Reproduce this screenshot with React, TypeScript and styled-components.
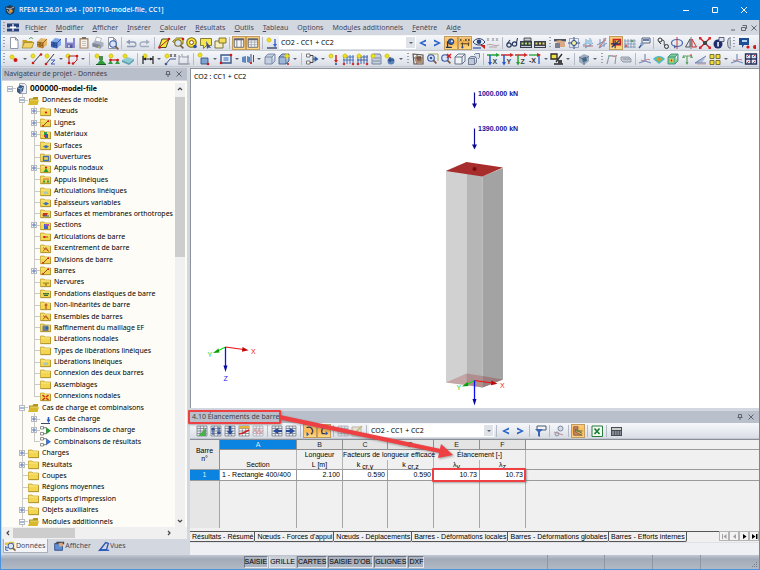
import React, { ReactNode } from "react";
import styled, { createGlobalStyle, css } from "styled-components";

const GlobalStyle = createGlobalStyle`
  * { box-sizing: border-box; }
  body { margin: 0; font-family: "Noto Sans", sans-serif; font-size: 7px; line-height: 10px; color: #000; }
  button, select { font: inherit; color: inherit; padding: 0; margin: 0; border: 0; background: none; }
  svg { display: block; }
`;

/* ---------- drawing helpers ---------- */

type LineProps = { d: string; c?: string; w?: number };
const L = ({ d, c = "#333", w = 1 }: LineProps) => <path d={d} fill="none" stroke={c} strokeWidth={w} />;
const F = ({ d, c = "#333" }: LineProps) => <path d={d} fill={c} />;
const Dot = ({ x, y, r = 1.3, c = "#d01818" }: { x: number; y: number; r?: number; c?: string }) => (
  <circle cx={x} cy={y} r={r} fill={c} />
);
const Spark = ({ x = 4, y = 4 }: { x?: number; y?: number }) => (
  <>
    <path d={`M${x - 3} ${y}H${x + 3}M${x} ${y - 3}V${y + 3}`} stroke="#f0e878" strokeWidth="1" />
    <circle cx={x} cy={y} r="2" fill="#efe21c" stroke="#b9a916" strokeWidth=".5" />
  </>
);
const Cabinet = ({ a, b, k }: { a: string; b: string; k: string }) => (
  <>
    <F d="M2 6l4-4 6 1v6l-4 3-6-1z" c={a} />
    <F d="M2 6l6 1v5.500l-6-1.500z" c={b} />
    <L d="M2 6l6 1 4-4M8 7v5M2 8.500l6 1M4 7.800h2M4 10.200h2" c={k} w={0.7} />
  </>
);
const Paper = () => (
  <path d="M3.500 1.500h5l2.500 2.500v8.500h-7.500zM8.500 1.500v2.500h2.500" fill="#fff" stroke="#777e90" strokeWidth=".8" />
);
const GridBox = ({ c = "#6a717e", f = "#e8ebf0" }: { c?: string; f?: string }) => (
  <path d="M2 2h10v10h-10zM2 4.500h10M2 7h10M2 9.500h10M5.300 2v10M8.700 2v10" fill={f} stroke={c} strokeWidth=".7" />
);
const Lens = ({ x = 6, y = 6, k = "#3757a5" }: { x?: number; y?: number; k?: string }) => (
  <>
    <circle cx={x} cy={y} r="3.300" fill="#d9e6f7" stroke={k} strokeWidth="1.100" />
    <path d={`M${x + 2.4} ${y + 2.4}l3 3`} stroke="#7a5a45" strokeWidth="1.700" />
  </>
);
const Cube = ({ f = "#dfe5ee", k = "#58677f" }: { f?: string; k?: string }) => (
  <path d="M2 5h7v7h-7zM2 5l3-3h7l-3 3M12 2v7l-3 3" fill={f} stroke={k} strokeWidth=".9" />
);
const Axis = ({ label, h, v }: { label: string; h: string; v: string }) => (
  <>
    <L d="M1 3h11" c={h} w={1.5} />
    <F d="M10 1l4 2-4 2z" c={h} />
    <L d="M4 3v9" c={v} w={1.5} />
    <F d="M2 10h4l-2 3.500z" c={v} />
    <text x="6.500" y="12" fontSize="7" fontWeight="700" fontFamily="Liberation Sans, sans-serif" fill="#444">{label}</text>
  </>
);
const Hatch = ({ a, b }: { a: string; b: string }) => (
  <>
    <L d="M3 3v9M6 3v9M9 3v9M12 3v9M2 5h11M2 8h11" c={a} w={0.9} />
    <Dot x={3} y={12} c={b} /><Dot x={12} y={12} c={b} />
  </>
);

const ICONS: Record<string, ReactNode> = {
  new: <Paper />,
  open: <><F d="M1.500 4h4l1 1h5v7h-10z" c="#c9a02a" /><F d="M1 12l2.500-5.500h9.500l-2.500 5.500z" c="#f0d468" /><L d="M1 12l2.500-5.500h9.500l-2.500 5.500z" c="#8f7425" w={0.6} /><L d="M8 3c1.500-2 3-1.500 4 0" c="#3f8f3f" /></>,
  cabinetA: <Cabinet a="#e5b76a" b="#c98c34" k="#70480f" />,
  cabinetB: <Cabinet a="#7da7ea" b="#3b67bf" k="#1d3777" />,
  save: <><F d="M2 2h10v10h-10z" c="#8688cf" /><F d="M4 2h6v4.500h-6z" c="#eceefa" /><F d="M4.500 8.500h5v3.500h-5z" c="#55588f" /><F d="M5.300 9h1.300v2.500h-1.300z" c="#fff" /></>,
  clip: <><F d="M2.500 2h9v10.500h-9z" c="#a98666" /><F d="M3.700 3.500h6.600v8h-6.600z" c="#f4f1ec" /><F d="M5 1h4v2h-4z" c="#77716c" /><L d="M5 5.500h4M5 7.500h4M5 9.500h4" c="#b5b0a8" w={0.7} /></>,
  print: <><F d="M4 5l1.500-4 5 1.500-1.500 4z" c="#fff" /><L d="M4 5l1.500-4 5 1.500-1.500 4z" c="#8a90a0" w={0.6} /><F d="M1.500 7l3-2.500 8 2v3.500l-3 2.500-8-2z" c="#aab1c0" /><F d="M1.500 7l8 2v3.500l-8-2z" c="#7b8499" /><Dot x={8} y={11} r={0.8} c="#f0dd40" /></>,
  preview: <><Paper /><Lens x={8} y={8} /></>,
  undo: <><L d="M3 10.500h7.500c2 0 2-4.500-1-4.500h-4.500" c="#8c9ab5" w={1.3} /><F d="M6 3.500v5l-4-2.500z" c="#8c9ab5" /></>,
  redo: <><L d="M11 10.500h-7.500c-2 0-2-4.500 1-4.500h4.500" c="#a3acbe" w={1.3} /><F d="M8 3.500v5l4-2.500z" c="#a3acbe" /></>,
  plane: <><path d="M2 11.500l3-8.500h7l-3 8.500z" fill="#f6e83c" stroke="#3d3d1c" strokeWidth=".9" /><L d="M2 11.500l10-8.500" c="#b02020" /><Dot x={2.5} y={11.5} /><Dot x={12} y={3} /></>,
  tag: <><path d="M1.500 5.500l4-3.500h6.500v6h-6.500z" fill="#f3e64d" stroke="#5c5520" strokeWidth=".8" /><Lens x={7} y={7} k="#7d6c2a" /><Dot x={12} y={3} /></>,
  target: <><circle cx="6.500" cy="6.500" r="4.700" fill="#f4e53a" stroke="#7f6a10" strokeWidth="1.100" /><circle cx="6.500" cy="6.500" r="2" fill="#fff" stroke="#8a5020" /><Dot x={10} y={10.5} c="#2d4fa5" r={1.8} /></>,
  comment: <><path d="M1.500 2.500h11v7h-5l-3 3v-3h-3z" fill="#f4e651" stroke="#6b6220" strokeWidth=".8" /><F d="M7 5l5 7-2.500-.5-1.500 1.500z" c="#3b4d86" /></>,
  windows: <><path d="M2 5h8v7h-8z" fill="#f5eec0" stroke="#6d6738" strokeWidth=".9" /><path d="M6 2h7v5h-7z" fill="#f4dd57" stroke="#75691e" strokeWidth=".9" /></>,
  panel: <><path d="M1.500 2h11v10h-11z" fill="#f4f5f8" stroke="#5c6370" /><L d="M1.500 3h11" c="#5c6370" w={1.6} /><L d="M4.500 3v9M9.500 3v9" c="#6a7180" /></>,
  sheet: <><path d="M1.500 2h11v10h-11z" fill="#f4f5f8" stroke="#5c6370" /><L d="M1.500 3h11" c="#5c6370" w={1.6} /><L d="M1.500 6h11M1.500 9h11M5 3v9M9 3v9" c="#8a909c" w={0.7} /></>,
  load: <><Spark /><L d="M2 12h10" c="#3c4a66" w={1.4} /><L d="M10 3v6" c="#3b68c8" w={1.4} /><F d="M8 8h4l-2 3.500z" c="#3b68c8" /></>,
  prev: <F d="M10 3.500v2l-4 1.500 4 1.500v2l-7-3.500z" c="#2461c8" />,
  next: <F d="M4 3.500v2l4 1.500-4 1.500v2l7-3.500z" c="#2461c8" />,
  showLoad: <><circle cx="7" cy="5.500" r="3.300" fill="#3b62ad" stroke="#1e3767" /><Dot x={8} y={5} r={1.2} c="#e8eefa" /><L d="M3 5v7.500M1 12h7" c="#27334d" w={1.5} /></>,
  showVal: <><L d="M1 2l2 3M3 2l-2 3M5 4.500h1M7 2l2 3M9 2l-2 3M10.500 2l2 3M12.500 2l-2 3" c="#46402c" w={0.9} /><L d="M2 8h10M4 6.500v6M11 6.500v4" c="#54462a" w={1.2} /><Dot x={4} y={12} c="#284da5" /></>,
  eye: <><path d="M1 6c3-4.500 9-4.500 12 0-3 4-9 4-12 0z" fill="#e8eefa" stroke="#29395f" /><Dot x={7} y={5.7} r={2.3} c="#27427f" /><F d="M8 9h5v4z" c="#c81d1d" /><L d="M1 12h8" c="#3a5bb0" w={1.3} /></>,
  valGrey: <><L d="M1 2l2 3M3 2l-2 3M6 2l2 3M8 2l-2 3M10 2l2 3M12 2l-2 3" c="#9ea2ab" w={0.9} /><L d="M1 9c4-2 8 2 12 0M3 11h8" c="#b7a0a6" /></>,
  glasses: <><circle cx="4" cy="9" r="2.200" fill="none" stroke="#25375c" strokeWidth="1.200" /><circle cx="9.500" cy="8" r="2.200" fill="none" stroke="#25375c" strokeWidth="1.200" /><L d="M6 8.500h2M2 8l3-4M11.500 7l1-5" c="#25375c" w={1.1} /></>,
  film: <><F d="M1 5h12v7h-12z" c="#3a404d" /><F d="M2.500 6.500h2v2h-2zM6 6.500h2v2h-2zM9.500 6.500h2v2h-2z" c="#e7d850" /><F d="M2 10h10v1h-10z" c="#d9dce4" /></>,
  film2: <><F d="M1 5h12v7h-12z" c="#3a404d" /><F d="M2.500 6.500h2v2h-2zM6 6.500h2v2h-2zM9.500 6.500h2v2h-2z" c="#b4d86b" /><F d="M2 10h10v1h-10zM5 2h7v3h-7z" c="#c5cad6" /><L d="M5 2h7v3h-7z" w={0.8} /></>,
  hand: <><F d="M1 3h12v2.500h-12z" c="#4e535e" /><F d="M3 5c4-2 8 0 9 2v4h-7z" c="#dba884" /><F d="M2 7h5v5h-5z" c="#777e8d" /></>,
  snap: <><L d="M1 7h12M7 1v12" c="#27427f" /><L d="M2.500 2.500h9v9h-9z" c="#7688b0" w={0.7} /><circle cx="7" cy="7" r="2.500" fill="#f3f4a0" stroke="#27427f" /></>,
  gridA: <><L d="M2 9l9-5M4 12l8-5M5 3v9M9 2v9" c="#75a3c9" /><F d="M5 4h6v4h-6z" c="#a8cbe4" /><L d="M2 10h10" c="#b96e78" /></>,
  gridB: <><L d="M2 9l9-5M4 12l8-5M5 3v9M9 2v9" c="#7394c4" /><L d="M11 2l-7 10" c="#c87979" w={1.3} /></>,
  gridC: <><path d="M4 3h8v6h-8z" fill="#f2b236" stroke="#ce2222" strokeWidth="1.800" /><L d="M1 8h11M6 4v9M2 12l9-8" c="#26336f" w={1.3} /></>,
  gridD: <><L d="M2 3v9M5 3v9M8 3v9M11 3v9M1 5h12M1 8h12M1 11h12" c="#7c93b4" w={0.8} /><Dot x={3} y={10} c="#cc6060" /><Dot x={9} y={5} c="#67a070" /></>,
  flagGlass: <><path d="M5 2h8v5h-8z" fill="#eef1f6" stroke="#56617a" /><L d="M6 4h6M2 12l4-5" c="#37548e" w={1.4} /><Dot x={5} y={8} r={1.8} c="#8aa0ca" /></>,
  chain: <><circle cx="4" cy="4" r="2" fill="none" stroke="#333" /><circle cx="10.500" cy="10.500" r="2" fill="none" stroke="#333" /><L d="M6 4c4 0 1 5 3 6M3 6l2 2" /></>,
  rotate: <><ellipse cx="7" cy="7" rx="5.500" ry="3.500" fill="none" stroke="#4567ae" strokeWidth="1.200" /><L d="M7 1v12" c="#c93434" /><F d="M4 9l3 1.500-3 2z" c="#4567ae" /></>,
  mirror: <><L d="M7 1v12" c="#555" w={0.8} /><L d="M6 11h-4.500l4.500-8z" c="#555" /><L d="M8 11h4.500l-4.500-8z" c="#c63030" /></>,
  cross: <><L d="M2 2l10 10M12 2l-10 10" c="#c81818" w={1.3} /><F d="M5 5h4v4h-4z" c="#444" /><F d="M1 1h2.500v2.500h-2.500zM10.500 1h2.500v2.500h-2.500zM1 10.500h2.500v2.500h-2.500zM10.500 10.500h2.500v2.500h-2.500z" c="#d32c2c" /></>,
  info: <><circle cx="6" cy="8" r="4.500" fill="#1f2d6b" /><F d="M5.300 6h1.500v4.500h-1.500z" c="#fff" /><path d="M7 1.500h5v4h-5z" fill="#dfe3ee" stroke="#38416c" strokeWidth=".8" /></>,
  roll: <><path d="M3 2h6v10h-6c-2-2-2-8 0-10z" fill="#c6cbd4" stroke="#646c7c" strokeWidth=".9" /><L d="M5 4v6" c="#646c7c" /></>,
  chat: <><F d="M2 2h10v7h-5l-2 3v-3h-3z" c="#1f4f93" /><F d="M5 4h5v2h-5z" c="#b4d4f5" /><Dot x={11} y={11} r={1.6} /></>,
  edge: <Dot x={4} y={11} r={2} />,
  node: <><Spark x={5} y={5} /><Dot x={8.5} y={8} r={2} /></>,
  line: <><Spark /><L d="M4 11l8-9" c="#3a3a3a" /><Dot x={4} y={11} /><Dot x={12} y={2.5} /></>,
  lineXZ: <><Spark /><L d="M3 12l8-10" c="#3a3a3a" /><L d="M8 8h4l-4 4h4" c="#3d5fb8" /><Dot x={3} y={12} /></>,
  arc: <><Spark x={3} y={4} /><L d="M4 11v-7h8v4l-4 4" c="#b32525" /><Dot x={4} y={11} /><Dot x={12} y={4} /><Dot x={8} y={11.5} /></>,
  support: <><Spark /><F d="M6 4h4v4h-4z" c="#4c8a51" /><F d="M4 12l4-5 5 5z" c="#2f9c3c" /><F d="M3 12h10v1h-10z" c="#1d5a26" /></>,
  supports: <><Spark /><L d="M3 8h9" c="#c22" w={1.3} /><F d="M1 12l2.500-4 2.500 4zM8 12l2.500-4 2.500 4z" c="#2f9c3c" /><Dot x={3.5} y={8} /><Dot x={10.5} y={8} /></>,
  surf: <><F d="M1 8l5-3 7 2-5 4z" c="#8fcbd4" /><F d="M1 8v2l7 3v-2zM8 13l5-4v-2l-5 4z" c="#5d9fb4" /><Spark /></>,
  dim: <><Spark /><L d="M2 4v8M12 4v8M2 7h10" c="#222" w={1.2} /><F d="M2 7l3-1.500v3zM12 7l-3-1.500v3z" c="#222" /></>,
  dimX: <><Spark /><L d="M3 12l4-5h6" c="#3d5590" /><L d="M7 2l2 3M9 2l-2 3M11 2l2 3M13 2l-2 3" c="#444" w={0.8} /><Dot x={3} y={12} c="#3d5590" /></>,
  frame: <L d="M2 3v9h9v-9M2 5h2M5 2v3h7M1 12h12" c="#9198a6" />,
  member: <><Spark x={3} y={3} /><F d="M4 6h7v6h-7z" c="#7fa2cf" /><L d="M4 6h7v6h-7z" c="#35557f" w={0.9} /><Dot x={11} y={12} /></>,
  section: <><L d="M2 3h10v8h-10z" c="#3c5a8b" w={1.4} /><F d="M4.500 5h5v4h-5z" c="#87aada" /><Dot x={2} y={11} /><Dot x={12} y={3} /></>,
  beams: <><F d="M1 5l4-1v7l-4-1zM6 4l3 1v6l-3-1z" c="#5c87bf" /><L d="M10 2v10M12.500 3v7" c="#36507b" /><Dot x={10} y={11} r={1} /></>,
  solid: <Cube f="#c3d0e2" k="#7284a0" />,
  solidNew: <><Cube f="#9fb7d6" k="#46608a" /><Spark x={10} y={4} /><Dot x={11} y={12} r={1.1} /></>,
  combine: <><path d="M1.500 2h3.500v3h-3.500zM1.500 9h3.500v3h-3.500z" fill="#fff" stroke="#555" strokeWidth=".8" /><L d="M5 3.500h3v7h-3M8 7h3" c="#444" /><F d="M9.500 4l4 3-4 3z" c="#2c5dab" /></>,
  loadNode: <><Spark /><L d="M9 3v6" c="#c22" w={1.5} /><F d="M7 8h4l-2 3z" c="#c22" /><Dot x={9} y={12} c="#2855b0" r={1.1} /></>,
  loadLine: <><Hatch a="#3a66b5" b="#c33" /><Spark /></>,
  loadArea: <><Hatch a="#3459a0" b="#c33" /><Spark /></>,
  loadFree: <><path d="M3 2h8l1 2v8h-9z" fill="#c6d0de" stroke="#6d7b93" strokeWidth=".9" /><L d="M4 6h7M4 9h7" c="#7f8ea8" /><Spark /></>,
  loadGen: <><Spark /><circle cx="8" cy="9" r="3.500" fill="#5981bb" /><L d="M7 5v5M5 8h6" c="#223f70" /></>,
  pan: <><L d="M2 2l10 1v9l-9 0zM2 6h10M6 2v10" c="#5f5048" w={1.1} /><F d="M4 4.500l6-.5 2 3-1 4-5 .5-2-3z" c="#b38a70" /><L d="M5 6h5M7 4v5M9 4v5" c="#463a32" w={0.8} /></>,
  zoomWin: <><L d="M3 2h10v7" c="#993" w={0.8} /><Lens /><Dot x={6} y={6} r={1.3} c="#34519b" /></>,
  zoomOut: <><Lens /><L d="M8 2l4 4M12 2l-4 4" c="#cf2020" w={1.5} /></>,
  wire: <Cube f="#f0f3f8" />,
  cubes: <><path d="M1.500 6.500h6v6h-6zM1.500 6.500l2-2h6l-2 2M9.500 4.500v6l-2 2" fill="#bfc9da" stroke="#5b6a85" strokeWidth=".8" /><path d="M7 3l1.500-1.500h4v4l-1.500 1.500" fill="#dbe1ec" stroke="#5b6a85" strokeWidth=".8" /></>,
  axX: <Axis label="X" h="#23a338" v="#2558cf" />,
  axY: <Axis label="Y" h="#d02828" v="#2558cf" />,
  axZ: <Axis label="Z" h="#d02828" v="#23a338" />,
  axMX: <><L d="M1 3h11" c="#23a338" w={1.3} /><F d="M9 1l4 2-4 2z" c="#c22" /><L d="M11 4v8" c="#2558cf" w={1.3} /><text x="1" y="11" fontSize="7" fontWeight="700" fontFamily="Liberation Sans, sans-serif" fill="#333">-X</text></>,
  visib: <><F d="M1 2h6v5h-6z" c="#f0e23d" /><L d="M1 2h6v5h-6zM12 2l-6 8M4 12h9" c="#2b2b2b" w={1.3} /><F d="M8 8h4v4h-4z" c="#444" /></>,
  render: <><F d="M2 5l5-3 5 2v5l-5 4-5-3z" c="#9aabbf" /><F d="M5 6l4-1 1 4-4 1z" c="#3d6484" /><L d="M2 5l5 3 5-4M7 8v5" c="#566a82" w={0.8} /></>,
  deform: <><L d="M2 12l2-8h7l-1 8" c="#9098a6" w={1.1} /><L d="M4 4c3-2 5 3 8-1" c="#bb8d92" /><Dot x={4} y={4} r={0.9} c="#6c9" /></>,
  block: <><path d="M2 5h8l2 2v3h-8l-2-2z" fill="#c5cad3" stroke="#8b92a0" strokeWidth=".9" /><L d="M4 7h7" c="#8b92a0" /></>,
  resDef: <><L d="M1 11l6-2 6 2M7 2v7" c="#7790bb" w={1.2} /><L d="M3 8c3 2 6-2 9 0" c="#c87b8b" /></>,
  rainbow: <><F d="M1 7c3-4 9-4 12 0l-6 5z" c="#4eb3e8" /><F d="M3 7c2-3 6-3 8 0l-4 4z" c="#68c95c" /><F d="M5 7c1-2 3-2 4 0l-2 2.500z" c="#f1853a" /></>,
  solidRes: <><Cube f="#7fcf86" k="#3c8f8f" /><F d="M4 7h3v3h-3z" c="#e9d24d" /><Dot x={5.5} y={8.5} r={0.9} /></>,
  react: <><L d="M3 4h9M7 4v8" c="#60a568" w={1.2} /><F d="M2 6l1.500-3 1.500 3zM10 6l1.500-3 1.500 3zM5.500 10h3l-1.500 3z" c="#60a568" /><Dot x={11} y={3} r={0.8} /></>,
  diag: <><F d="M1 11l11-7-4 7z" c="#aebcd8" /><L d="M1 11l11-7M1 11h11" c="#6f85b3" /><L d="M3 12h9" c="#c88" w={0.7} /></>,
  tiles: <path d="M2 2.500h4v4h-4zM8 2.500h4v4h-4zM2 8.500h4v4h-4zM8 8.500h4v4h-4z" fill="#f0de36" stroke="#5f571c" strokeWidth=".8" />,
  layout: <><path d="M1.500 2h11v10h-11zM1.500 7h11M7 2v10" fill="#dfe5f2" stroke="#27315e" strokeWidth="1.400" /><L d="M3 5l2-2M9 5l2-2M3 11l2-2M9 11l2-2" c="#c43a3a" /></>,
  tEdit: <><GridBox /><F d="M3 12l8-8v8z" c="#47b04d" /></>,
  tSort: <><GridBox /><L d="M4 4v7M2.500 6l1.500-2 1.500 2M10 3v7M8.500 8l1.500 2 1.500-2" c="#274c9e" w={1.2} /></>,
  tDown: <><GridBox /><L d="M7 2v6" c="#274c9e" w={2} /><F d="M4 7h6l-3 4z" c="#274c9e" /></>,
  tColor: <><GridBox f="#fff" /><F d="M2 2h10v2.500h-10z" c="#e5b540" /><L d="M2 10l4-1 6-3" c="#c22" w={1.8} /></>,
  tWave: <><GridBox c="#a8a9b1" f="#ececf0" /><L d="M2 9l2-4 2 5 2-5 2 5 2-4" c="#d99a9f" /></>,
  tLeft: <><GridBox /><F d="M8 4v2h4v2h-4v2l-5-3z" c="#274c9e" /></>,
  tRight: <><GridBox /><F d="M6 4v2h-4v2h4v2l5-3z" c="#274c9e" /></>,
  hookA: <><L d="M3 3c5-2 8 2 7 6" c="#3a3d50" w={1.6} /><F d="M3 8l3 3-3 2z" c="#2e58b5" /><Dot x={9} y={10} r={1.2} c="#3a3d50" /></>,
  hookB: <><L d="M11 3c-6-1-8 3-6 7h4" c="#3a3d50" w={1.6} /><F d="M9 7l3 3-3 2z" c="#2e58b5" /></>,
  greyT: <GridBox c="#a3a8b2" f="#dcdfe5" />,
  greyP: <><path d="M2 3h9v9h-9z" fill="#e6e4d8" stroke="#aaa898" strokeWidth=".8" /><L d="M5 9l7-7" c="#c9b87c" w={1.6} /></>,
  filter: <><path d="M4 2h9v4h-9z" fill="#f2f4f8" stroke="#4c586e" /><F d="M2 5h8l-3 3v5l-2-1v-4z" c="#3865b4" /></>,
  pick: <><circle cx="8.500" cy="4.500" r="2.500" fill="#d4dae6" stroke="#7b879c" /><circle cx="5" cy="10" r="2" fill="#d4dae6" stroke="#8c96a8" /><L d="M2 8l9 3" c="#ba8f98" /></>,
  stair: <><path d="M2 2h5v3h-3v3l8 4h-10z" fill="#c9855c" stroke="#6b4c3a" strokeWidth=".8" /><L d="M4 5l8 5M5 7h7" c="#3f6f4f" w={1.1} /></>,
  excel: <><path d="M2 2h10.500v10.500h-10.500z" fill="#f4fbf4" stroke="#2a7a3a" /><L d="M4.500 4.500l5 5.500M9.500 4.500l-5 5.500" c="#1d7f35" w={1.8} /></>,
  calc: <><F d="M2 3h11v9h-11z" c="#474c57" /><F d="M3 4h9v2h-9z" c="#c9d2c8" /><L d="M3 8h9M3 10h9" c="#c6cad2" w={1} /><L d="M5.500 7v5M8 7v5M10.500 7v5" c="#474c57" w={0.8} /></>,
  tabData: <><F d="M1 3h5v3h-5zM6 2h6v9h-6z" c="#e8c33f" /><L d="M2 7v5M2 9h3M2 12h3" c="#2f67bd" w={1.2} /><Lens x={8} y={7} /></>,
  tabShow: <><path d="M2 4h9v8h-9z" fill="#5e8fd6" stroke="#274a84" /><F d="M4 2h9v3h-9z" c="#3e4451" /><F d="M6 4l5-1 1 4-4 1z" c="#dba884" /></>,
  tabViews: <><L d="M2 12l7-9 3 1-2 7z" c="#2b58b8" w={1.6} /><L d="M1 12h12" c="#2b58b8" w={1.5} /></>,
};

/* ---------- shared parts ---------- */

const Glyph = styled.svg`
  width: 14px;
  height: 14px;
  flex: none;
`;

const ToolButton = styled.button<{ $on?: boolean; $cut?: boolean }>`
  width: ${(p) => (p.$cut ? 5 : 14)}px;
  height: 14px;
  flex: none;
  overflow: hidden;
  ${(p) =>
    p.$on &&
    css`
      background: linear-gradient(#fbd08a, #fdb84e 50%, #fde08f);
      box-shadow: inset 0 0 0 1px #c29b5f;
    `}
`;

const ToolIcon = styled(Glyph)<{ $on?: boolean }>`
  padding: ${(p) => (p.$on ? "1px" : "0")};
`;

const Divider = styled.span<{ $wide?: boolean }>`
  width: 1px;
  height: 12px;
  margin: 0 ${(p) => (p.$wide ? 3 : 2)}px 0 2px;
  flex: none;
  background: #b4bac6;
`;

const Grip = styled.span`
  width: 2px;
  height: 12px;
  margin: 0 2px;
  flex: none;
  background: repeating-linear-gradient(#9aa1b0 0 1px, transparent 1px 3px);
`;

const DropButton = styled.button`
  width: 8px;
  height: 14px;
  flex: none;
  display: grid;
  place-items: center;
`;

const Triangle = styled.span`
  border: 2px solid transparent;
  border-top-color: #5b6270;
  border-bottom: 0;
`;

const ToolStrip = styled.div`
  display: flex;
  align-items: center;
  flex: none;
  height: 16px;
  overflow: hidden;
  border-bottom: 1px solid #c3c8d1;
  background: linear-gradient(#f6f7fa, #e9ecf1 50%, #d9dde5);
`;

const ComboBox = styled.label`
  position: relative;
  flex: none;
  display: flex;
  align-items: center;
  height: 13px;
  background: #fff;
`;

const ComboSelect = styled.select<{ $w: number }>`
  appearance: none;
  width: ${(p) => p.$w}px;
  height: 13px;
  padding: 0 10px 0 2px;
  outline: 0;
`;

const ComboArrow = styled.span`
  position: absolute;
  right: 1px;
  top: 1px;
  bottom: 1px;
  width: 9px;
  display: grid;
  place-items: center;
  pointer-events: none;
  background: #dfe2e9;
`;

const Combo = ({ width, label }: { width: number; label: string }) => (
  <ComboBox>
    <ComboSelect $w={width} aria-label={label} defaultValue="co2">
      <option value="co2">CO2 - CC1 + CC2</option>
    </ComboSelect>
    <ComboArrow><Triangle /></ComboArrow>
  </ComboBox>
);

/* Token grammar: "|" divider, ":" wide divider, "#" grip, "v" drop arrow, "!name" pressed, "~name" clipped, "=n" combo */
const Tools = ({ items }: { items: string }) => (
  <>
    {items.split(" ").map((t, i) => {
      if (t === "|") return <Divider key={i} />;
      if (t === ":") return <Divider key={i} $wide />;
      if (t === "#") return <Grip key={i} />;
      if (t === "v") return <DropButton key={i} aria-label="Plus"><Triangle /></DropButton>;
      if (t[0] === "=") return <Combo key={i} width={Number(t.slice(1))} label="Combinaison" />;
      const on = t[0] === "!";
      const cut = t[0] === "~";
      const name = on || cut ? t.slice(1) : t;
      return (
        <ToolButton key={i} $on={on} $cut={cut} aria-label={name}>
          <ToolIcon $on={on} viewBox="0 0 14 14">{ICONS[name]}</ToolIcon>
        </ToolButton>
      );
    })}
  </>
);

/* ---------- window frame ---------- */

const Window = styled.div`
  display: flex;
  flex-direction: column;
  height: 100vh;
  border: solid #4a93dc;
  border-width: 0 1px 1px;
  background: #d3d7e0;
`;

const TitleBar = styled.header`
  display: flex;
  align-items: center;
  height: 20px;
  flex: none;
  padding: 0 2px 0 4px;
  margin: 0 -1px;
  background: #0078d7;
  color: #fff;
`;

const TitleText = styled.h1`
  flex: 1;
  margin: 0 0 0 3px;
  font-size: 7px;
  font-weight: 500;
`;

const AppGlyph = styled(Glyph)`
  width: 12px;
  height: 12px;
`;

const CaptionButton = styled.button`
  width: 29px;
  height: 20px;
  display: grid;
  place-items: center;
`;

const CaptionGlyph = styled.svg`
  width: 8px;
  height: 8px;
  fill: none;
  stroke: #fff;
`;

const MenuBar = styled.nav`
  display: flex;
  align-items: center;
  height: 15px;
  flex: none;
  color: #444a58;
`;

const MenuList = styled.ul`
  display: flex;
  flex: 1;
  gap: 9px;
  margin: 0;
  padding: 0 0 0 6px;
  list-style: none;
`;

const MdiButton = styled.button`
  width: 10px;
  height: 10px;
  display: grid;
  place-items: center;
`;

const MdiGlyph = styled.svg`
  width: 6px;
  height: 6px;
  fill: none;
  stroke: #60656f;
`;

const FlagGlyph = styled.svg`
  width: 12px;
  height: 9px;
`;

const MENUS: [string, string, string][] = [
  ["Fic", "h", "ier"], ["", "M", "odifier"], ["", "A", "fficher"], ["", "I", "nsérer"], ["", "C", "alculer"],
  ["", "R", "ésultats"], ["", "O", "utils"], ["", "T", "ableau"], ["O", "p", "tions"],
  ["Mod", "u", "les additionnels"], ["", "F", "enêtre"], ["Ai", "d", "e"],
];

/* ---------- navigator ---------- */

const Body = styled.div`
  display: flex;
  flex: 1;
  min-height: 0;
  gap: 3px;
  padding-top: 1px;
`;

const Navigator = styled.aside`
  display: flex;
  flex-direction: column;
  width: 186px;
  flex: none;
  padding-left: 1px;
`;

const PaneHeader = styled.div`
  position: relative;
  display: flex;
  align-items: center;
  height: 12px;
  flex: none;
  padding: 0 3px 0 2px;
  background: #b9c0cb;
  color: #3c414b;
`;

const PaneTitle = styled.h2`
  flex: 1;
  margin: 0;
  font-size: 7px;
  font-weight: 400;
`;

const PaneButton = styled.button`
  width: 11px;
  height: 10px;
  display: grid;
  place-items: center;
`;

const TreePane = styled.div`
  display: flex;
  flex: 1;
  min-height: 0;
  margin-top: 1px;
  padding-top: 2px;
  background: #fdfcf6;
`;

const Tree = styled.ul`
  display: flex;
  flex-direction: column;
  flex: 1;
  min-width: 0;
  margin: 0;
  padding: 0 0 0 2px;
  list-style: none;
  overflow: hidden;
`;

const TreeRow = styled.li`
  display: flex;
  align-items: stretch;
  flex: 1;
  min-height: 0;
  white-space: nowrap;
`;

const Guide = styled.span<{ $kind: string }>`
  width: 12px;
  flex: none;
  display: grid;
  place-items: center;
  background-repeat: no-repeat;
  background-image: ${(p) =>
    [
      p.$kind !== "none" && p.$kind !== "root" && "linear-gradient(#c9c9c5, #c9c9c5)",
      (p.$kind === "tee" || p.$kind === "ell" || p.$kind === "root") && "linear-gradient(#c9c9c5, #c9c9c5)",
    ]
      .filter(Boolean)
      .join(", ") || "none"};
  background-size: ${(p) => (p.$kind === "root" ? "6px 1px" : `1px ${p.$kind === "ell" ? "50%" : "100%"}, 6px 1px`)};
  background-position: ${(p) => (p.$kind === "root" ? "right center" : "6px 0, right center")};
`;

const Toggle = styled.button`
  width: 6px;
  height: 6px;
  border: 1px solid #b5b9c0;
  background: #fff;
`;

const ToggleGlyph = styled.svg`
  width: 4px;
  height: 4px;
  fill: none;
  stroke: #5a73b2;
`;

const FolderGlyph = styled.svg`
  width: 11px;
  height: 11px;
  flex: none;
  align-self: center;
`;

const TreeLabel = styled.span<{ $root?: boolean }>`
  align-self: center;
  margin-left: 3px;
  ${(p) => p.$root && css`font-family: Inter, sans-serif; font-weight: 700;`}
`;

const ScrollV = styled.div`
  display: flex;
  flex-direction: column;
  justify-content: space-between;
  width: 10px;
  flex: none;
  margin-right: 2px;
  background: #f0f0f0;
`;

const ScrollThumbV = styled.div`
  height: 36%;
  margin: 2px 0 auto;
  background: #cdcdcd;
`;

const ScrollH = styled.div`
  display: flex;
  align-items: center;
  height: 12px;
  flex: none;
  padding: 0 13px 0 1px;
  background: #f0f0f0;
`;

const ScrollThumbH = styled.div`
  width: 36%;
  height: 10px;
  margin-right: auto;
  background: #cdcdcd;
`;

const ScrollButton = styled.button`
  width: 10px;
  height: 12px;
  flex: none;
  display: grid;
  place-items: center;
`;

const ChevronGlyph = styled.svg`
  width: 6px;
  height: 6px;
  fill: none;
  stroke: #444;
  stroke-width: 1.2;
`;

const NavTabs = styled.div`
  display: flex;
  align-items: center;
  height: 16px;
  flex: none;
  gap: 5px;
  padding-left: 1px;
  color: #444a58;
`;

const NavTab = styled.button<{ $active?: boolean }>`
  display: flex;
  align-items: center;
  height: 14px;
  padding-right: 2px;
  align-self: flex-start;
  ${(p) => p.$active && css`background: #f3f4f7; border: 1px solid #aab0bc; border-top: 0;`}
`;

const NavTabGlyph = styled.svg`
  width: 12px;
  height: 12px;
`;

type Node = [depth: number, label: string, toggle: "" | "+" | "-", icon: string];
const NODES: Node[] = [
  [0, "000000-model-file", "-", "app"],
  [1, "Données de modèle", "-", "open"],
  [2, "Nœuds", "+", "dot"],
  [2, "Lignes", "+", "line"],
  [2, "Matériaux", "+", "mat"],
  [2, "Surfaces", "", "surf"],
  [2, "Ouvertures", "", "hole"],
  [2, "Appuis nodaux", "+", "supp"],
  [2, "Appuis linéiques", "", "supl"],
  [2, "Articulations linéiques", "", "faint"],
  [2, "Épaisseurs variables", "", "surf"],
  [2, "Surfaces et membranes orthotropes", "", "ortho"],
  [2, "Sections", "+", "sect"],
  [2, "Articulations de barre", "", "hinge"],
  [2, "Excentrement de barre", "", "exc"],
  [2, "Divisions de barre", "", "line"],
  [2, "Barres", "+", "line"],
  [2, "Nervures", "", "rib"],
  [2, "Fondations élastiques de barre", "", "found"],
  [2, "Non-linéarités de barre", "", "nonlin"],
  [2, "Ensembles de barres", "", "exc"],
  [2, "Raffinement du maillage EF", "", "mesh"],
  [2, "Libérations nodales", "", ""],
  [2, "Types de libérations linéiques", "", ""],
  [2, "Libérations linéiques", "", "faint"],
  [2, "Connexion des deux barres", "", ""],
  [2, "Assemblages", "", ""],
  [2, "Connexions nodales", "", "conn"],
  [1, "Cas de charge et combinaisons", "-", "open"],
  [2, "Cas de charge", "+", "case"],
  [2, "Combinaisons de charge", "+", "combG"],
  [2, "Combinaisons de résultats", "", "combB"],
  [1, "Charges", "+", ""],
  [1, "Résultats", "+", ""],
  [1, "Coupes", "", ""],
  [1, "Régions moyennes", "", ""],
  [1, "Rapports d'impression", "", ""],
  [1, "Objets auxiliaires", "+", ""],
  [1, "Modules additionnels", "-", "open"],
];

const MARKS: Record<string, ReactNode> = {
  dot: <Dot x={6} y={6.5} r={1.1} />,
  line: <><L d="M3 9l5-5" c="#8a3a18" w={0.9} /><Dot x={3} y={8.8} r={0.9} /><Dot x={8.3} y={4.2} r={0.9} /></>,
  mat: <><F d="M4 3h3v3h-3z" c="#2f9f4b" /><F d="M5 5h3v4h-3z" c="#3058b5" /><F d="M4 6h2v2h-2z" c="#c33" /></>,
  surf: <F d="M3 6.500l3-1.500 3 1.500-3 2z" c="#3a74b8" />,
  hole: <L d="M3.500 4.500h5v4h-5z" c="#3f72b8" w={1.3} />,
  supp: <><F d="M3.500 9l2.500-4 2.500 4z" c="#1f9a35" /><Dot x={6} y={4.5} r={1.1} /></>,
  supl: <><F d="M2.500 8.500l1.500-3 1.500 3zM6.500 8.500l1.500-3 1.500 3z" c="#2d9440" /><L d="M3 5h6" c="#c33" w={0.7} /></>,
  faint: <F d="M4 5.500h4v2.500h-4z" c="#a9c8b8" />,
  ortho: <><F d="M3 5h5l-1.500 3h-4z" c="#c5352b" /><L d="M3 8h6" c="#2d5fae" /></>,
  sect: <><F d="M4 4h4v5h-4z" c="#3b64cc" /><F d="M5 4h4v2h-4z" c="#c04aa0" /></>,
  hinge: <><L d="M3 6h5" c="#8a3a18" w={0.8} /><Dot x={4.5} y={6} r={1.1} /></>,
  exc: <L d="M3 8.500l3-4 2.500 4M3 4.500l5.500 3.500" c="#b04a20" w={0.8} />,
  rib: <F d="M3 5.500h6v1.200h-2v2h-2v-2h-2z" c="#a8902a" />,
  found: <><F d="M3 5h6v1.500h-6z" c="#3d7f35" /><L d="M4 7.500h4" c="#3d5f35" /></>,
  nonlin: <L d="M6 3.500v5.500M4.500 5h3" c="#b3461a" w={1.1} />,
  mesh: <><F d="M2.500 3.500h6v5.500h-6z" c="#6d8189" /><Dot x={7} y={6} r={1.5} c="#2f5fc4" /></>,
  conn: <><L d="M2.500 4l6 5M8.500 4l-6 5" c="#c92a1c" w={1.5} /><Dot x={5.5} y={6.5} r={1} c="#f0d030" /></>,
};

const NodeIcon = ({ kind }: { kind: string }) => {
  if (kind === "app")
    return (
      <>
        <path d="M3.500.5h5l2 2v8h-7z" fill="#eef0f4" stroke="#8d94a2" strokeWidth=".8" />
        <F d="M1 5l3-3 4 1-1 5-3 3-3-2z" c="#3b5a86" />
        <L d="M2 5l3 1 2-2M5 6v4" c="#c9d8ee" w={0.7} />
      </>
    );
  if (kind === "case")
    return (<><L d="M1 9.500h9" c="#3c4a66" /><L d="M8.500 3v3" c="#2e5fc8" w={1.6} /><F d="M6.500 5.500h4l-2 3.500z" c="#2e5fc8" /></>);
  if (kind === "combG" || kind === "combB")
    return (
      <>
        <path d="M.5 1.500h3v2.500h-3zM.5 7.500h3v2.500h-3z" fill="#fff" stroke="#777" strokeWidth=".8" />
        <L d="M3.500 2.700h3v6h-3" c="#555" w={0.8} />
        <F d="M6.500 2.500l4.500 3.200-4.500 3.300z" c={kind === "combG" ? "#1aa52c" : "#2f6fe0"} />
      </>
    );
  if (kind === "open")
    return (
      <>
        <F d="M1 3.500h3.500l1-1.500h4.500v7h-9z" c="#b3951c" />
        <F d="M0 10l2-5h9l-1.500 5z" c="#d9b92c" />
        <L d="M2 5h9" c="#f5e690" w={0.7} />
      </>
    );
  return (
    <>
      <path d="M.5 2h3.500l1 1h5.500v6.500h-10z" fill="#f3d64f" stroke="#c09d26" strokeWidth=".7" />
      <L d="M1 4h9" c="#fbef9c" w={0.8} />
      <L d="M.5 9.700h10.200v-6.500" c="#9c7d1a" w={0.6} />
      {MARKS[kind]}
    </>
  );
};

const guideFor = (i: number) => {
  const depth = NODES[i][0];
  if (depth === 0) return "root";
  return depth === 2 && (!NODES[i + 1] || NODES[i + 1][0] < 2) ? "ell" : "tee";
};

const NavigatorPane = () => (
  <Navigator>
    <PaneHeader>
      <PaneTitle>Navigateur de projet - Données</PaneTitle>
      <PaneTools />
    </PaneHeader>
    <TreePane>
      <Tree role="tree">
        {NODES.map(([depth, label, toggle, icon], i) => (
          <TreeRow key={i} role="treeitem">
            {Array.from({ length: depth }, (_, k) => <Guide key={k} $kind={k === 0 ? "none" : "bar"} />)}
            <Guide $kind={guideFor(i)}>
              {toggle && (
                <Toggle aria-label={label}>
                  <ToggleGlyph viewBox="0 0 4 4"><path d={toggle === "+" ? "M0 2h4M2 0v4" : "M0 2h4"} /></ToggleGlyph>
                </Toggle>
              )}
            </Guide>
            <FolderGlyph viewBox="0 0 11 11"><NodeIcon kind={icon} /></FolderGlyph>
            <TreeLabel $root={depth === 0}>{label}</TreeLabel>
          </TreeRow>
        ))}
      </Tree>
      <ScrollV>
        <ScrollButton aria-label="Haut"><ChevronGlyph viewBox="0 0 6 6"><path d="M1 4l2-2 2 2" /></ChevronGlyph></ScrollButton>
        <ScrollThumbV />
        <ScrollButton aria-label="Bas"><ChevronGlyph viewBox="0 0 6 6"><path d="M1 2l2 2 2-2" /></ChevronGlyph></ScrollButton>
      </ScrollV>
    </TreePane>
    <ScrollH>
      <ScrollButton aria-label="Gauche"><ChevronGlyph viewBox="0 0 6 6"><path d="M4 1l-2 2 2 2" /></ChevronGlyph></ScrollButton>
      <ScrollThumbH />
      <ScrollButton aria-label="Droite"><ChevronGlyph viewBox="0 0 6 6"><path d="M2 1l2 2-2 2" /></ChevronGlyph></ScrollButton>
    </ScrollH>
    <NavTabs>
      {[["tabData", "Données"], ["tabShow", "Afficher"], ["tabViews", "Vues"]].map(([icon, label], i) => (
        <NavTab key={label} $active={i === 0}>
          <NavTabGlyph viewBox="0 0 14 14">{ICONS[icon]}</NavTabGlyph>
          {label}
        </NavTab>
      ))}
    </NavTabs>
  </Navigator>
);

const PaneTools = () => (
  <>
    <PaneButton aria-label="Épingler">
      <MdiGlyph viewBox="0 0 6 6"><path d="M1.500 .5h3v3h-3zM.5 3.500h5M3 3.500v2.500" /></MdiGlyph>
    </PaneButton>
    <PaneButton aria-label="Fermer">
      <MdiGlyph viewBox="0 0 6 6"><path d="M.5 .5l5 5M5.500 .5l-5 5" /></MdiGlyph>
    </PaneButton>
  </>
);

/* ---------- model view ---------- */

const Main = styled.main`
  display: flex;
  flex-direction: column;
  flex: 1;
  min-width: 0;
`;

const ModelView = styled.section`
  position: relative;
  flex: 1;
  min-height: 0;
  background: #fff;
  border: solid #8d929b;
  border-width: 1px 0 0 1px;
`;

const ViewCaption = styled.span`
  position: absolute;
  left: 3px;
  top: 3px;
`;

const SceneSvg = styled.svg`
  width: 100%;
  height: 100%;
  font-family: "Liberation Sans", sans-serif;
  font-size: 7px;
`;

const Triad = ({ x, y }: { x: number; y: number }) => (
  <g transform={`translate(${x} ${y})`}>
    <L d="M0 0l18 2.500" c="#f01010" w={1.2} />
    <F d="M17 0l6 3.200-6.500 1.500z" c="#c00808" />
    <L d="M0 0l-8 4" c="#10e010" w={1.2} />
    <F d="M-7 1.500l-5.500 4.500 6.500-.5z" c="#08a008" />
    <L d="M0 0v20" c="#1010f0" w={1.3} />
    <F d="M-2 18.500h4l-2 6.500z" c="#0808a8" />
    <text x="25.500" y="7" fill="#f02020">X</text>
    <text x="-18" y="9.500" fill="#10d830">Y</text>
  </g>
);

const Scene = () => (
  <SceneSvg viewBox="191 70 568 338" preserveAspectRatio="xMidYMid meet">
    <polygon points="446,171 466.500,162.500 466.500,374 482.500,388 446,383" fill="#d1d1d1" />
    <polygon points="466.500,170 482.500,177 482.500,388 466.500,379" fill="#b6b6b6" />
    <polygon points="482.500,177 503,168.500 503,380 482.500,388" fill="#a3a3a3" />
    <polygon points="446,383 466.500,374 466.500,385.500" fill="#c5a5a5" />
    <polygon points="466.500,374 482.500,376.500 482.500,388 466.500,385.500" fill="#ae8e8e" />
    <polygon points="482.500,376.500 503,380 482.500,388" fill="#9c7c7c" />
    <polygon points="446,171.500 466.500,162.500 503,168 482.500,177" fill="#a72c2c" />
    <Dot x={474.5} y={169.5} r={2} c="#780c0c" />
    <L d="M474.500 93v13M474.500 129v18" c="#0c0c98" w={1.2} />
    <F d="M472 104h5l-2.500 5zM472 145h5l-2.500 5z" c="#0c0c98" />
    <text x="478" y="96.500" fill="#12129c" fontWeight="700">1000.000 kN</text>
    <text x="478" y="131.500" fill="#12129c" fontWeight="700">1390.000 kN</text>
    <Triad x={474.5} y={381} />
    <Triad x={225.5} y={347.5} />
    <text x="223.500" y="381" fill="#2020e8">Z</text>
  </SceneSvg>
);

/* ---------- result table ---------- */

const ResultPane = styled.section`
  position: relative;
  flex: none;
  display: flex;
  flex-direction: column;
  margin-top: 3px;
`;

const Marked = styled.span`
  position: absolute;
  left: -2px;
  top: -1px;
  width: 93px;
  height: 14px;
  border: 2px solid #ee4043;
  border-radius: 1px;
  box-shadow: 1px 1px 2px #6668;
`;

const Pointer = styled.svg`
  position: absolute;
  left: 90px;
  top: 4px;
  width: 180px;
  height: 46px;
  pointer-events: none;
  filter: drop-shadow(1px 1px 1px #5558);
`;

const TableStrip = styled(ToolStrip)`
  padding-left: 5px;
`;

const Grid = styled.table`
  width: 100%;
  table-layout: fixed;
  border-collapse: separate;
  border-spacing: 0;
  background: #f0f0f0;
  border-top: 1px solid #8a8e96;
  font-family: "Liberation Sans", sans-serif;
  line-height: 8px;

  th, td { padding: 0; font-weight: 400; white-space: nowrap; }
`;

const Col = styled.col<{ $w?: number }>`
  ${(p) => p.$w && `width: ${p.$w}px;`}
`;

const LetterCell = styled.th<{ $active?: boolean }>`
  height: 9px;
  border-right: 1px solid #8f8f8f;
  border-bottom: 1px solid #8f8f8f;
  background: ${(p) => (p.$active ? "#0a84e0" : "#e4e4e4")};
  color: ${(p) => (p.$active ? "#d6ecff" : "#222")};
`;

const HeadCell = styled.th<{ $line?: boolean; $open?: boolean }>`
  height: 10px;
  overflow: visible;
  border-right: ${(p) => (p.$open ? 0 : "1px solid #b4b4b4")};
  border-bottom: ${(p) => (p.$line ? "1px solid #9a9a9a" : 0)};
`;

const RowHead = styled.th<{ $active?: boolean }>`
  height: 11px;
  background: ${(p) => (p.$active ? "#0a84e0" : "#e6e6e6")};
  color: #d6ecff;
  border-right: 1px solid #8f8f8f;
  border-bottom: 1px solid #9a9a9a;
`;

const CornerCell = styled.th`
  background: #e6e6e6;
  border-right: 1px solid #8f8f8f;
  border-bottom: 1px solid #9a9a9a;
`;

const Cell = styled.td<{ $left?: boolean; $plain?: boolean }>`
  position: relative;
  height: 11px;
  text-align: ${(p) => (p.$left ? "left" : "right")};
  background: ${(p) => (p.$plain ? "#f0f0f0" : "#fff")};
  border-right: ${(p) => (p.$plain ? 0 : "1px solid #9a9a9a")};
  border-bottom: 1px solid #9a9a9a;
`;

const CellText = styled.span`
  padding: 0 2px;
`;

const CellMark = styled.span`
  position: absolute;
  left: -2px;
  top: -2px;
  width: 94px;
  height: 14px;
  z-index: 1;
  border: 2px solid #ee4043;
  border-radius: 1px;
  box-shadow: 1px 1px 2px #6668;
`;

const EmptyCell = styled.td<{ $shade?: boolean; $open?: boolean }>`
  height: 47px;
  background: ${(p) => (p.$shade ? "#e6e6e6" : "#f0f0f0")};
  border-right: ${(p) => (p.$open ? 0 : "1px solid #a6a6a6")};
`;

const Sub = styled.sub`
  font-size: 7px;
  line-height: 0;
  vertical-align: -2px;
`;

const SheetBar = styled.div`
  display: flex;
  height: 15px;
  padding-top: 3px;
  background: #f0f0f0;
  border-bottom: 1px solid #dfe1e6;
  font-family: "Liberation Sans", sans-serif;
  line-height: 9px;
`;

const SheetTab = styled.button`
  height: 11px;
  padding: 0 1px 0 2px;
  border: solid #555;
  border-width: 1px 1px 1px 0;
  border-radius: 0 0 2px 0;
  white-space: nowrap;
`;

const SheetFill = styled.span`
  flex: 1;
  border-top: 1px solid #555;
`;

const PageButton = styled.button`
  width: 10px;
  height: 10px;
  display: grid;
  place-items: center;
  border: 1px solid #b4b4b4;
  background: #f3f3f3;
`;

const PageGlyph = styled.svg<{ $dim?: boolean }>`
  width: 7px;
  height: 7px;
  fill: ${(p) => (p.$dim ? "#a0a0a0" : "#000")};
`;

const SHEETS = [
  "Résultats - Résumé", "Nœuds - Forces d'appui", "Nœuds - Déplacements",
  "Barres - Déformations locales", "Barres - Déformations globales", "Barres - Efforts internes",
];

const PAGES: [string, string, boolean][] = [
  ["Première", "M1 1h1v5h-1zM5.500 1v5l-3-2.500z", true],
  ["Précédente", "M5 1v5l-3-2.500z", true],
  ["Suivante", "M2 1v5l3.500-2.500z", false],
  ["Dernière", "M5 1h1.500v5h-1.500zM1 1v5l3.500-2.500z", false],
];

const TablePane = () => (
  <ResultPane>
    <PaneHeader>
      <PaneTitle>4.10 Élancements de barre</PaneTitle>
      <PaneTools />
      <Marked />
    </PaneHeader>
    <TableStrip>
      <Tools items="tEdit tSort tDown tColor tWave | tLeft tRight | !hookA !hookB | greyT greyP | =125 | prev next : filter | pick | !stair | excel | calc" />
    </TableStrip>
    <Grid>
      <colgroup>
        {[30, 77, 46, 45, 46, 46, 46].map((w, i) => <Col key={i} $w={w} />)}
        <Col />
      </colgroup>
      <thead>
        <tr>
          <CornerCell rowSpan={3}>Barre<br />n°</CornerCell>
          {"ABCDEF".split("").map((c) => <LetterCell key={c} $active={c === "A"}>{c}</LetterCell>)}
          <HeadCell as="td" $line $open />
        </tr>
        <tr>
          <HeadCell />
          <HeadCell>Longueur</HeadCell>
          <HeadCell colSpan={2}>Facteurs de longueur efficace</HeadCell>
          <HeadCell colSpan={2}>Élancement [-]</HeadCell>
          <HeadCell as="td" $open />
        </tr>
        <tr>
          <HeadCell $line>Section</HeadCell>
          <HeadCell $line>L [m]</HeadCell>
          <HeadCell $line>k <Sub>cr,y</Sub></HeadCell>
          <HeadCell $line>k <Sub>cr,z</Sub></HeadCell>
          <HeadCell $line>λ<Sub>y</Sub></HeadCell>
          <HeadCell $line>λ<Sub>z</Sub></HeadCell>
          <HeadCell as="td" $line $open />
        </tr>
      </thead>
      <tbody>
        <tr>
          <RowHead $active scope="row">1</RowHead>
          <Cell $left><CellText>1 - Rectangle 400/400</CellText></Cell>
          <Cell><CellText>2.100</CellText></Cell>
          <Cell><CellText>0.590</CellText></Cell>
          <Cell><CellText>0.590</CellText></Cell>
          <Cell><CellText>10.73</CellText><CellMark /></Cell>
          <Cell><CellText>10.73</CellText></Cell>
          <Cell $plain />
        </tr>
        <tr>
          {Array.from({ length: 8 }, (_, i) => <EmptyCell key={i} $shade={i === 0} $open={i === 7} />)}
        </tr>
      </tbody>
    </Grid>
    <Pointer viewBox="0 0 180 46">
      <path d="M0 0L163 34.500L162 38.500L0 4.500z" fill="#ee4043" />
      <path d="M161 29L173 40L158 43z" fill="#ee4043" />
    </Pointer>
    <SheetBar>
      {SHEETS.map((s) => <SheetTab key={s}>{s}</SheetTab>)}
      <SheetFill />
      {PAGES.map(([label, d, dim]) => (
        <PageButton key={label} aria-label={label}><PageGlyph $dim={dim} viewBox="0 0 7 7"><path d={d} /></PageGlyph></PageButton>
      ))}
    </SheetBar>
    <BottomGap />
  </ResultPane>
);

const BottomGap = styled.div`
  height: 12px;
  background: #eef0f3;
`;

/* ---------- status bar ---------- */

const StatusBar = styled.footer`
  display: flex;
  align-items: center;
  height: 14px;
  flex: none;
  gap: 1px;
  padding-left: 32%;
  background: linear-gradient(#c2c8d2, #a2aab8 30%, #b2b9c5);
  font-family: "Liberation Sans", sans-serif;
`;

const StatusToggle = styled.button<{ $on?: boolean }>`
  height: 12px;
  white-space: nowrap;
  border: 1px solid;
  border-color: ${(p) => (p.$on ? "#c6cbd4 #c6cbd4 #e4e7ec #e4e7ec" : "#707683 #e4e7ec #e4e7ec #707683")};
  ${(p) => p.$on && "background: #c9ced8;"}
`;

const StatusCells = styled.div`
  flex: 1;
  align-self: stretch;
  display: grid;
  grid-template-columns: 120fr 56fr 47fr 47fr 57fr;
`;

const StatusCell = styled.span`
  border-right: 1px solid #8f97a5;
  &:last-of-type { border: 0; }
  display: flex;
  align-items: flex-end;
  justify-content: flex-end;
`;

const SizeGrip = styled.svg`
  width: 8px;
  height: 8px;
  fill: #77808f;
`;

/* ---------- app ---------- */

const TOOLS_TOP =
  "# new open cabinetA cabinetB save clip print preview | undo redo | plane tag target comment windows | !panel !sheet | load =137 prev next !showLoad !showVal eye valGrey | glasses film2 film # hand snap gridA gridB !gridC gridD flagGlass | chain rotate mirror cross info ~roll # chat ~edge";
const TOOLS_BOTTOM =
  "# node v line lineXZ v arc v : support supports surf : dim v dimX frame : member v section v beams v solid solidNew v : combine v loadNode loadLine loadArea loadFree loadGen v # pan zoomWin zoomOut wire cubes | axX axY axZ axMX v visib v | render v # deform block | resDef rainbow solidRes react diag tiles v resDef layout";

export default function App() {
  return (
    <Window>
      <GlobalStyle />
      <TitleBar>
        <AppGlyph viewBox="0 0 12 12">
          <F d="M1 3l5-2 5 2-1 6-4 2-4-2z" c="#27384f" />
          <L d="M2 4l4 1 4-2M6 5v5M3 6l2 3" c="#b9c5d4" w={0.9} />
          <Dot x={7} y={7} r={1.7} c="#e79a2c" />
        </AppGlyph>
        <TitleText>RFEM 5.26.01 x64 - [001710-model-file, CC1]</TitleText>
        {[["Réduire", "M1 4.500h6"], ["Agrandir", "M1.500 1.500h5v5h-5z"], ["Fermer", "M1 1l6 6M7 1l-6 6"]].map(([label, d]) => (
          <CaptionButton key={label} aria-label={label}><CaptionGlyph viewBox="0 0 8 8"><path d={d} /></CaptionGlyph></CaptionButton>
        ))}
      </TitleBar>
      <MenuBar>
        <Grip />
        <FlagGlyph viewBox="0 0 12 9">
          <path d="M0 .5h12v8h-12z" fill="#27407c" />
          <path d="M0 5h12M6 1v7M3 4h6" stroke="#fff" strokeWidth="1.200" />
        </FlagGlyph>
        <MenuList>
          {MENUS.map(([a, u, b]) => <li key={a + u + b}>{a}<u>{u}</u>{b}</li>)}
        </MenuList>
        {[["Réduire le document", "M0 5h4"], ["Restaurer le document", "M1.500 .5h4v3h-1M.5 2.500h4v3h-4z"], ["Fermer le document", "M.5 .5l5 5M5.500 .5l-5 5"]].map(([label, d]) => (
          <MdiButton key={label} aria-label={label}><MdiGlyph viewBox="0 0 6 6"><path d={d} /></MdiGlyph></MdiButton>
        ))}
      </MenuBar>
      <ToolStrip><Tools items={TOOLS_TOP} /></ToolStrip>
      <ToolStrip><Tools items={TOOLS_BOTTOM} /></ToolStrip>
      <Body>
        <NavigatorPane />
        <Main>
          <ModelView>
            <Scene />
            <ViewCaption>CO2 : CC1 + CC2</ViewCaption>
          </ModelView>
          <TablePane />
        </Main>
      </Body>
      <StatusBar>
        {["SAISIE", "GRILLE", "CARTES", "SAISIE D'OB.", "GLIGNES", "DXF"].map((s) => (
          <StatusToggle key={s} $on={s === "GRILLE"}>{s}</StatusToggle>
        ))}
        <StatusCells>
          {[1, 2, 3, 4].map((k) => <StatusCell key={k} />)}
          <StatusCell>
            <SizeGrip viewBox="0 0 8 8"><path d="M5 1h1v1h-1zM3 3h1v1h-1zM5 3h1v1h-1zM1 5h1v1h-1zM3 5h1v1h-1zM5 5h1v1h-1z" /></SizeGrip>
          </StatusCell>
        </StatusCells>
      </StatusBar>
    </Window>
  );
}
